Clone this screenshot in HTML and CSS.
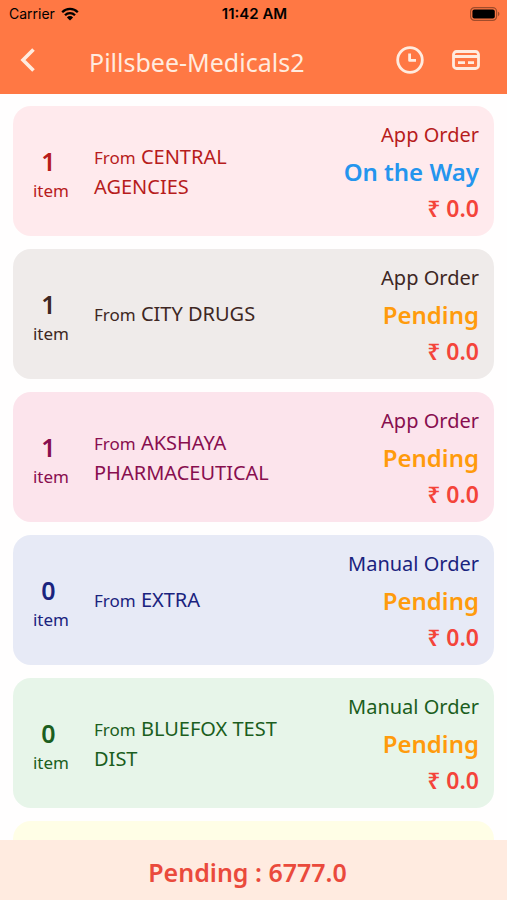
FILE: index.html
```html
<!DOCTYPE html>
<html lang="en">
<head>
  <meta charset="UTF-8">
  <meta name="viewport" content="width=device-width, initial-scale=1.0">
  <title>Pillsbee-Medicals2</title>
  <link rel="stylesheet" href="styles.css">
</head>
<body>
  <header class="header">
    <div class="status-bar">
      <div class="carrier">
        <span>Carrier</span>
        <svg class="wifi" viewBox="0 0 18 14" aria-hidden="true">
          <path d="M1.2 5.2a11 11 0 0 1 15.6 0M4 8.2a7 7 0 0 1 10 0" fill="none" stroke="#000" stroke-width="2.3"/>
          <path d="M9 13.6L5.9 10.4a4.4 4.4 0 0 1 6.2 0z"/>
        </svg>
      </div>
      <span class="time">11:42 AM</span>
      <svg class="battery" viewBox="0 0 30 14" aria-hidden="true">
        <rect x="0.6" y="0.6" width="26" height="12.8" rx="4" fill="none" stroke="#a14c2b" stroke-width="1.2"/>
        <rect x="2.4" y="2.4" width="22.4" height="9.2" rx="2"/>
        <path d="M28 4.8a2.4 2.4 0 0 1 0 4.4z" fill="#a14c2b"/>
      </svg>
    </div>
    <nav class="nav-bar">
      <button class="icon-button" type="button" aria-label="Back">
        <svg class="back-icon" viewBox="0 0 16 24"><path d="M13.5 1.5L3 12l10.5 10.5"/></svg>
      </button>
      <h1 class="title">Pillsbee-Medicals2</h1>
      <button class="icon-button" type="button" aria-label="History">
        <svg class="nav-icon" viewBox="0 0 28 28"><circle cx="14" cy="14" r="12.3"/><path d="M13.6 7.5v6.9h6.4"/></svg>
      </button>
      <button class="icon-button" type="button" aria-label="Payments">
        <svg class="nav-icon" viewBox="0 0 28 28"><rect x="1.5" y="5.5" width="25" height="17" rx="3"/><path d="M1.5 10.5h25M6 16.7h7M16 16.7h6"/></svg>
      </button>
    </nav>
  </header>

  <main class="orders">
    <article class="order red">
      <div class="count"><strong>1</strong><span>item</span></div>
      <p class="from"><small>From</small> CENTRAL AGENCIES</p>
      <div class="summary">
        <span class="type">App Order</span>
        <span class="state on-the-way">On the Way</span>
        <span class="amount">₹ 0.0</span>
      </div>
    </article>
    <article class="order brown">
      <div class="count"><strong>1</strong><span>item</span></div>
      <p class="from"><small>From</small> CITY DRUGS</p>
      <div class="summary">
        <span class="type">App Order</span>
        <span class="state">Pending</span>
        <span class="amount">₹ 0.0</span>
      </div>
    </article>
    <article class="order pink">
      <div class="count"><strong>1</strong><span>item</span></div>
      <p class="from"><small>From</small> AKSHAYA PHARMACEUTICAL</p>
      <div class="summary">
        <span class="type">App Order</span>
        <span class="state">Pending</span>
        <span class="amount">₹ 0.0</span>
      </div>
    </article>
    <article class="order indigo">
      <div class="count"><strong>0</strong><span>item</span></div>
      <p class="from"><small>From</small> EXTRA</p>
      <div class="summary">
        <span class="type">Manual Order</span>
        <span class="state">Pending</span>
        <span class="amount">₹ 0.0</span>
      </div>
    </article>
    <article class="order green">
      <div class="count"><strong>0</strong><span>item</span></div>
      <p class="from"><small>From</small> BLUEFOX TEST DIST</p>
      <div class="summary">
        <span class="type">Manual Order</span>
        <span class="state">Pending</span>
        <span class="amount">₹ 0.0</span>
      </div>
    </article>
    <article class="order yellow"></article>
  </main>

  <footer class="total">Pending : 6777.0</footer>
</body>
</html>
```
FILE: styles.css
```css
* {
  box-sizing: border-box;
}
body {
  margin: 0;
  height: 100vh;
  display: flex; flex-direction: column;
  overflow: hidden;
  background: #fffefe;
  font-family: "Noto Sans", sans-serif;
}

/* header */
.header {
  flex: none;
  background: #ff7844;
}
.status-bar {
  display: grid;
  grid-template-columns: 1fr auto 1fr;
  align-items: center;
  height: 27px;
  padding: 0 7px 0 9px;
  font-family: Inter, sans-serif;
  font-size: 14px;
  color: #000;
}
.carrier {
  display: flex; align-items: center;
  gap: 6px;
}
.wifi {
  width: 18px; height: 14px;
}
.time {
  font-size: 15px;
  font-weight: 600;
}
.battery {
  width: 30px; height: 14px;
  justify-self: end;
}
.nav-bar {
  display: flex; align-items: center;
  height: 67px;
  padding: 0 27px 2px 20px;
  gap: 28px;
}
.icon-button {
  display: flex;
  padding: 0;
  border: 0;
  background: none;
  cursor: pointer;
}
.icon-button svg {
  fill: none;
  stroke: #ffebdf;
  stroke-width: 2.8;
  stroke-linejoin: round;
}
.icon-button .back-icon {
  width: 16px; height: 24px;
  stroke-width: 3.6;
  stroke-linejoin: miter;
}
.nav-icon {
  width: 28px; height: 28px;
}
.title {
  flex: 1;
  margin: 0;
  padding: 5px 0 0 25px;
  font-size: 25px;
  font-weight: 400;
  line-height: 32px;
  color: #ffebdf;
}

/* order list */
.orders {
  flex: 1;
  min-height: 0;
  display: flex; flex-direction: column;
  gap: 13px;
  padding: 12px 13px 0;
  overflow: hidden;
}
.order {
  flex: none;
  display: flex; align-items: center;
  min-height: 130px;
  padding: 8px 15px;
  border-radius: 18px;
}
.count {
  flex: none;
  display: flex; flex-direction: column;
  align-items: center;
  width: 46px;
  padding-top: 8px;
  font-size: 17px;
  line-height: 28px;
}
.count strong {
  padding-right: 5px;
  font-size: 25px;
  font-weight: 600;
  line-height: 32px;
}
.from {
  flex: 1;
  margin: 0;
  padding-left: 20px;
  font-size: 20px;
  line-height: 29px;
}
.from small {
  font-size: 17px;
}
.summary {
  flex: none;
  display: flex; flex-direction: column;
  align-items: flex-end;
  width: 190px;
  line-height: 37px;
}
.type {
  font-size: 20px;
}
.state {
  font-size: 24px;
  font-weight: 600;
  color: #ff9b0c;
}
.on-the-way {
  color: #2495ee;
}
.amount {
  font-size: 23px;
  font-weight: 600;
  color: #f4443a;
}

.red { background: #ffeaed; color: #b71c1c; }
.brown { background: #efebea; color: #3e2723; }
.pink { background: #fce4ec; color: #880e4f; }
.indigo { background: #e7eaf6; color: #1a237e; }
.green { background: #e7f5e9; color: #1b5e20; }
.yellow { background: #fffee6; color: #f57f17; }

.total {
  flex: none;
  padding: 16px 28px 12px 16px;
  background: #ffebe0;
  color: #ea4a3c;
  font-size: 25px;
  font-weight: 600;
  line-height: 32px;
  text-align: center;
}
```
